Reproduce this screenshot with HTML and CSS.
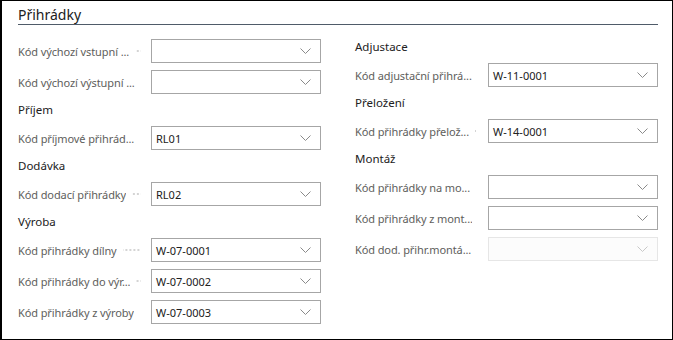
FILE: index.html
```html
<!DOCTYPE html>
<html lang="cs">
<head>
  <meta charset="UTF-8" />
  <title>Přihrádky</title>
  <link rel="stylesheet" href="styles.css">
</head>
<body>
  <div class="page">
    <h2 class="title">Přihrádky</h2>

    <div class="columns">
      <!-- levý sloupec -->
      <div class="column left">
        <div class="field">
          <span class="label"><span class="label-text">Kód výchozí vstupní ...</span><span class="dots"></span></span>
          <div class="select"><span class="value"></span><svg class="chevron" width="11" height="6" viewBox="0 0 11 6"><polyline points="0.5,0.5 5.5,5.5 10.5,0.5" /></svg></div>
        </div>
        <div class="field">
          <span class="label"><span class="label-text">Kód výchozí výstupní ...</span><span class="dots"></span></span>
          <div class="select"><span class="value"></span><svg class="chevron" width="11" height="6" viewBox="0 0 11 6"><polyline points="0.5,0.5 5.5,5.5 10.5,0.5" /></svg></div>
        </div>

        <h3 class="group">Příjem</h3>
        <div class="field">
          <span class="label"><span class="label-text">Kód příjmové přihrád...</span><span class="dots"></span></span>
          <div class="select"><span class="value">RL01</span><svg class="chevron" width="11" height="6" viewBox="0 0 11 6"><polyline points="0.5,0.5 5.5,5.5 10.5,0.5" /></svg></div>
        </div>

        <h3 class="group">Dodávka</h3>
        <div class="field">
          <span class="label"><span class="label-text">Kód dodací přihrádky</span><span class="dots"></span></span>
          <div class="select"><span class="value">RL02</span><svg class="chevron" width="11" height="6" viewBox="0 0 11 6"><polyline points="0.5,0.5 5.5,5.5 10.5,0.5" /></svg></div>
        </div>

        <h3 class="group">Výroba</h3>
        <div class="field">
          <span class="label"><span class="label-text">Kód přihrádky dílny</span><span class="dots"></span></span>
          <div class="select"><span class="value">W-07-0001</span><svg class="chevron" width="11" height="6" viewBox="0 0 11 6"><polyline points="0.5,0.5 5.5,5.5 10.5,0.5" /></svg></div>
        </div>
        <div class="field">
          <span class="label"><span class="label-text">Kód přihrádky do výr...</span><span class="dots"></span></span>
          <div class="select"><span class="value">W-07-0002</span><svg class="chevron" width="11" height="6" viewBox="0 0 11 6"><polyline points="0.5,0.5 5.5,5.5 10.5,0.5" /></svg></div>
        </div>
        <div class="field">
          <span class="label"><span class="label-text">Kód přihrádky z výroby</span><span class="dots"></span></span>
          <div class="select"><span class="value">W-07-0003</span><svg class="chevron" width="11" height="6" viewBox="0 0 11 6"><polyline points="0.5,0.5 5.5,5.5 10.5,0.5" /></svg></div>
        </div>
      </div>

      <!-- pravý sloupec -->
      <div class="column">
        <h3 class="group">Adjustace</h3>
        <div class="field">
          <span class="label"><span class="label-text">Kód adjustační přihrá...</span><span class="dots"></span></span>
          <div class="select"><span class="value">W-11-0001</span><svg class="chevron" width="11" height="6" viewBox="0 0 11 6"><polyline points="0.5,0.5 5.5,5.5 10.5,0.5" /></svg></div>
        </div>

        <h3 class="group">Přeložení</h3>
        <div class="field">
          <span class="label"><span class="label-text">Kód přihrádky přelož...</span><span class="dots"></span></span>
          <div class="select"><span class="value">W-14-0001</span><svg class="chevron" width="11" height="6" viewBox="0 0 11 6"><polyline points="0.5,0.5 5.5,5.5 10.5,0.5" /></svg></div>
        </div>

        <h3 class="group">Montáž</h3>
        <div class="field">
          <span class="label"><span class="label-text">Kód přihrádky na mo...</span><span class="dots"></span></span>
          <div class="select"><span class="value"></span><svg class="chevron" width="11" height="6" viewBox="0 0 11 6"><polyline points="0.5,0.5 5.5,5.5 10.5,0.5" /></svg></div>
        </div>
        <div class="field">
          <span class="label"><span class="label-text">Kód přihrádky z mont...</span><span class="dots"></span></span>
          <div class="select"><span class="value"></span><svg class="chevron" width="11" height="6" viewBox="0 0 11 6"><polyline points="0.5,0.5 5.5,5.5 10.5,0.5" /></svg></div>
        </div>
        <div class="field">
          <span class="label"><span class="label-text">Kód dod. přihr.montá...</span><span class="dots"></span></span>
          <div class="select disabled"><span class="value"></span><svg class="chevron" width="11" height="6" viewBox="0 0 11 6"><polyline points="0.5,0.5 5.5,5.5 10.5,0.5" /></svg></div>
        </div>
      </div>
    </div>
  </div>
</body>
</html>
```

FILE: styles.css
```css
html, body {
  margin: 0;
  background: #fff;
}

body {
  font-family: "Segoe UI", "Noto Sans", sans-serif;
  color: #212121;
}

/* rámeček celé stránky */
.page {
  width: 673px;
  height: 340px;
  box-sizing: border-box;
  border: 1px solid #000;
  border-left-width: 2px;
  padding: 0 14px 0 16px;
}

.title {
  margin: 0;
  padding-top: 5px;
  font-size: 14px;
  font-weight: normal;
  line-height: 18px;
  border-bottom: 1px solid #4f5b69;
}

.columns {
  display: grid;
  grid-template-columns: 303px 303px;
  column-gap: 34px;
  padding-top: 13px;
}

.column.left {
  padding-top: 1px;
}

.group {
  margin: 0 0 7px;
  font-size: 11.5px;
  font-weight: normal;
  line-height: 18px;
  color: #212121;
}

.field {
  display: flex;
  align-items: center;
  height: 24px;
  margin-bottom: 7px;
}

.label {
  display: flex;
  align-items: center;
  width: 133px;
  flex: none;
  padding-right: 10px;
  box-sizing: border-box;
  font-size: 11px;
  letter-spacing: -0.1px;
  color: #605e5c;
}

.label-text {
  white-space: nowrap;
  overflow: hidden;
}

/* tečky mezi popiskem a polem */
.dots {
  flex: 1;
  height: 2px;
  margin-left: 6px;
  background-image: linear-gradient(to right, #d4d4d4 50%, transparent 50%);
  background-size: 4px 2px;
  background-repeat: repeat-x;
  background-position: right center;
}

.select {
  flex: 1;
  display: flex;
  align-items: center;
  height: 24px;
  box-sizing: border-box;
  border: 1px solid #a6a6a6;
  padding: 0 9px 0 4px;
  background: #fff;
}

.value {
  flex: 1;
  font-size: 11px;
  color: #212121;
}

.chevron polyline {
  fill: none;
  stroke: #8a8a8a;
  stroke-width: 1;
}

.select.disabled {
  border-color: #e6e6e6;
  background: #fcfcfc;
}

.select.disabled .chevron polyline {
  stroke: #c8c8c8;
}
```
